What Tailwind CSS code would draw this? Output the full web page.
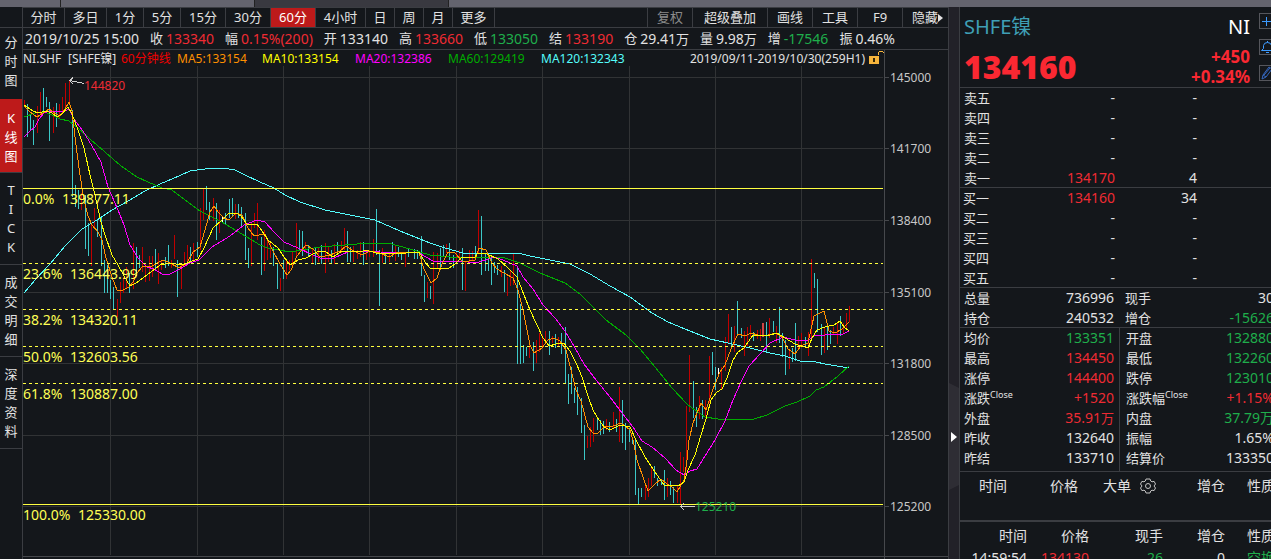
<!DOCTYPE html>
<html lang="zh-CN">
<head>
<meta charset="utf-8">
<meta name="viewport" content="width=device-width, initial-scale=1">
<title>SHFE镍 NI 60分钟线</title>
<script src="https://cdn.jsdelivr.net/npm/@tailwindcss/browser@4"></script>
</head>
<body class="flex h-screen flex-col overflow-hidden bg-[#14171b] font-['Noto_Sans','Noto_Sans_CJK_SC',sans-serif] text-[13px] text-[#e2e2e2]">
<div class="flex h-[7px] shrink-0 bg-[#64646e]">
  <div class="w-[61px] border-r border-[#222]"></div>
  <div class="w-[194px] border-r border-[#222]"></div>
  <div class="w-[194px] border-r border-[#222] bg-[#393940]"></div>
</div>
<div class="flex min-h-0 flex-1">
  <nav aria-label="视图" class="flex w-[23px] shrink-0 flex-col border-r border-[#3b3d42] text-center leading-[19px]">
    <div class="h-[21px] shrink-0 border-b border-[#3b3d42]"></div>
    <button class="h-[71px] shrink-0 px-1 pb-1">分时图</button>
    <button class="h-[74px] shrink-0 border-b border-[#3b3d42] bg-[#bd1a1a] px-1 pt-1 text-white">K<br>线<br>图</button>
    <button class="h-[92px] shrink-0 border-b border-[#3b3d42] px-1">T<br>I<br>C<br>K</button>
    <button class="h-[92px] shrink-0 border-b border-[#3b3d42] px-1">成交明细</button>
    <button class="h-[92px] shrink-0 border-b border-[#3b3d42] px-1">深度资料</button>
  </nav>

  <main class="flex min-w-0 flex-1 flex-col border-r border-[#3b3d42]">
    <div class="flex h-[21px] shrink-0 border-y border-[#3b3d42] leading-[19px]">
      <button class="w-[42px] border-r border-[#3b3d42]">分时</button>
      <button class="w-[42px] border-r border-[#3b3d42]">多日</button>
      <button class="w-[37px] border-r border-[#3b3d42]">1分</button>
      <button class="w-[37px] border-r border-[#3b3d42]">5分</button>
      <button class="w-[45px] border-r border-[#3b3d42]">15分</button>
      <button class="w-[45px] border-r border-[#3b3d42]">30分</button>
      <button class="w-[45px] border-r border-[#3b3d42] bg-[#bd1a1a] text-white">60分</button>
      <button class="w-[50px] border-r border-[#3b3d42]">4小时</button>
      <button class="w-[29px] border-r border-[#3b3d42]">日</button>
      <button class="w-[29px] border-r border-[#3b3d42]">周</button>
      <button class="w-[29px] border-r border-[#3b3d42]">月</button>
      <button class="w-[42px] border-r border-[#3b3d42]">更多</button>
      <div class="ml-auto flex">
        <button class="w-[46px] border-x border-[#3b3d42] text-[#8b8b8b]">复权</button>
        <button class="w-[75px] border-r border-[#3b3d42]">超级叠加</button>
        <button class="w-[45px] border-r border-[#3b3d42]">画线</button>
        <button class="w-[45px] border-r border-[#3b3d42]">工具</button>
        <button class="w-[45px] border-r border-[#3b3d42]">F9</button>
        <button class="flex w-[45px] items-center justify-center pl-1">隐藏<svg class="h-2 w-[5px]" viewBox="0 0 5 8"><path d="M0 0 5 4 0 8Z" fill="#e2e2e2"/></svg></button>
      </div>
    </div>
    <div class="flex h-[22px] shrink-0 gap-[11px] overflow-hidden border-b border-[#3b3d42] pl-[2px] leading-[21px] whitespace-nowrap">
      <span class="text-[14px]">2019/10/25 15:00</span>
      <span class="flex gap-[3px]">收<b class="text-[14px] font-normal text-[#ef2b33]">133340</b></span>
      <span class="flex gap-[3px]">幅<b class="text-[14px] font-normal text-[#ef2b33]">0.15%(200)</b></span>
      <span class="flex gap-[3px]">开<b class="text-[14px] font-normal">133140</b></span>
      <span class="flex gap-[3px]">高<b class="text-[14px] font-normal text-[#ef2b33]">133660</b></span>
      <span class="flex gap-[3px]">低<b class="text-[14px] font-normal text-[#1fae4b]">133050</b></span>
      <span class="flex gap-[3px]">结<b class="text-[14px] font-normal text-[#ef2b33]">133190</b></span>
      <span class="flex gap-[3px]">仓<b class="text-[14px] font-normal">29.41<span class="text-[13px]">万</span></b></span>
      <span class="flex gap-[3px]">量<b class="text-[14px] font-normal">9.98<span class="text-[13px]">万</span></b></span>
      <span class="flex gap-[3px]">增<b class="text-[14px] font-normal text-[#1fae4b]">-17546</b></span>
      <span class="flex gap-[3px]">振<b class="text-[14px] font-normal">0.46%</b></span>
    </div>
    <div class="flex h-4 shrink-0">
      <div class="flex min-w-0 flex-1 overflow-hidden text-[12px] leading-[17px] whitespace-nowrap">
        <span class="w-[45px] shrink-0">NI.SHF</span>
        <span class="w-[53px] shrink-0">[SHFE镍]</span>
        <span class="w-[56px] shrink-0 text-[#f00000]">60分钟线</span>
        <span class="w-[85px] shrink-0 text-[#ff9000]">MA5:133154</span>
        <span class="w-[93px] shrink-0 text-[#ffff00]">MA10:133154</span>
        <span class="w-[93px] shrink-0 text-[#ff00ff]">MA20:132386</span>
        <span class="w-[93px] shrink-0 text-[#00ac00]">MA60:129419</span>
        <span class="shrink-0 text-[#54fcfc]">MA120:132343</span>
        <span class="ml-auto shrink-0 pr-1">2019/09/11-2019/10/30(259H1)</span>
        <svg class="h-4 w-[15px] shrink-0" viewBox="0 0 15 16" shape-rendering="crispEdges"><path d="M0 6h10v8H0z" fill="#f7b53c"/><path d="M4 8h2v4H4z" fill="#3a2a08"/><path d="M9 5V3l2-2h2l2 2v2" fill="none" stroke="#f7b53c"/></svg>
      </div>
      <div class="w-16 shrink-0 border-l border-[#46484c]"></div>
    </div>
    <svg id="chart" class="min-h-0 w-full flex-1" viewBox="23 66 925 493" role="img" aria-label="60分钟K线图" shape-rendering="crispEdges">
      <path d="M23 77.5H883M23 148.5H883M23 220.5H883M23 292.5H883M23 363.5H883M23 435.5H883M23 506.5H883M110.5 66V555M197.5 66V555M283.5 66V555M369.5 66V555M456.5 66V555M542.5 66V555M629.5 66V555M715.5 66V555M801.5 66V555" fill="none" stroke="#313335"/>
      <path d="M884.5 66V559M23 556.5H948M884 77.5H889M884 148.5H889M884 220.5H889M884 292.5H889M884 363.5H889M884 435.5H889M884 506.5H889" fill="none" stroke="#46484c"/>
      <path id="down" fill="none" stroke="#3cc8c8"/>
      <path id="up" fill="none" stroke="#c00000"/>
      <path d="M762 323h2v14h-2z" fill="#d04444"/>
      <path d="M222.500 217V223M718.500 368V377" stroke="#fff"/>
      <g fill="none" id="averages">
        <polyline stroke="#54fcfc" points="24,293 36,279 50,264 65,246 82,229 97,220 112,210 130,200 145,191 160,184 172,179 190,171 205,169 222,168 235,170 245,175 260,182 274,188 285,195 300,202 325,210 350,215 375,220 400,231 430,243 445,248 463,253 490,254 518,253 530,256 550,260 570,264 590,274 610,286 630,297 652,313 668,322 685,329 710,339 728,343 750,348 770,353 785,356 800,361 816,362 825,364 849,368"/>
        <polyline stroke="#00ac00" points="24,117 35,113 44,112 52,115 60,119 69,121 77,127 90,139 105,152 121,166 137,177 148,182 162,188 172,190 185,200 200,211 220,221 237,231 260,245 268,248 290,252 320,247 345,245 370,243 388,243 410,249 430,255 450,257 480,257 505,258 520,263 540,273 565,283 580,294 600,314 606,320 626,335 640,349 655,367 672,388 688,405 705,417 718,419 754,419 767,415 785,406 797,402 810,396 816,390 824,387 838,376 849,366"/>
        <polyline stroke="#ff00ff" points="24,137 30,131 35,127 39,119 44,113 50,111 62,112 69,109 74,119 83,131 92,146 101,162 108,187 118,210 124,225 130,245 138,258 147,267 154,269 162,274 170,274 180,269 190,263 199,260 212,247 230,236 244,225 257,220 265,222 274,232 284,242 298,248 313,255 320,258 334,258 350,251 380,252 419,253 433,261 460,261 475,263 486,260 494,257 503,260 517,266 523,277 533,289 543,305 555,318 565,331 575,348 584,364 596,380 610,397 622,413 633,427 642,441 652,447 665,458 676,470 684,475 690,471 697,469 705,456 715,440 725,421 733,400 741,382 749,366 761,353 770,343 783,337 795,340 808,341 814,335 825,335 843,334 849,331"/>
        <polyline stroke="#ff9000" points="24,106 30,112 37,117 43,113 49,109 56,114 60,116 65,109 69,102 72,111 76,145 80,175 84,200 88,216 92,225 98,232 102,240 106,258 112,277 117,290 121,291 129,287 133,282 137,273 143,266 152,266 163,260 170,263 179,268 187,263 193,252 200,247 205,230 210,212 214,206 218,212 224,218 229,220 236,213 242,215 248,228 254,236 265,234 272,249 280,264 287,275 291,270 297,256 306,245 313,249 320,257 330,255 340,251 346,246 352,250 362,255 370,251 380,253 389,257 396,253 408,252 419,253 424,269 431,283 437,278 442,264 448,252 455,253 463,262 475,260 479,248 486,250 492,263 497,269 504,273 513,278 518,290 523,310 530,345 534,353 542,348 548,340 554,338 560,341 566,350 571,370 576,390 581,401 584,412 588,427 593,433 598,433 604,427 613,426 621,423 630,430 633,440 637,460 644,480 648,491 654,485 661,479 667,484 672,487 677,492 684,480 687,460 689,440 693,423 701,403 706,410 713,389 720,372 725,365 731,349 738,334 745,336 751,333 758,335 768,335 776,333 782,337 788,349 795,354 801,346 808,343 814,316 820,313 824,311 829,331 835,333 842,329 849,322"/>
        <polyline stroke="#ffff00" points="24,105 33,111 38,113 46,111 52,113 57,117 62,114 68,107 72,114 78,130 84,148 90,175 95,195 101,222 105,235 112,255 118,265 124,276 130,286 136,283 143,278 151,272 160,265 170,263 182,265 192,261 198,259 204,248 213,228 221,221 229,213 236,213 241,216 247,224 257,224 262,231 268,240 278,248 284,257 290,265 298,260 306,258 313,254 319,251 326,252 333,257 342,251 360,252 366,250 376,253 400,254 412,252 419,252 425,262 430,268 449,268 455,264 462,257 475,257 478,253 487,254 498,259 508,268 517,277 522,290 530,310 537,325 543,338 549,346 556,344 564,343 570,351 577,365 582,377 588,396 593,410 597,417 604,427 610,430 620,425 630,427 636,440 645,457 655,472 664,485 678,486 684,482 688,470 695,455 701,435 706,419 711,400 717,392 722,389 727,378 733,360 738,352 744,348 753,335 770,335 777,333 785,338 795,344 808,348 812,338 817,330 825,327 834,325 840,321 844,327 849,331"/>
      </g>
      <path d="M23 188.500H883M23 504.500H883" stroke="#ffff40"/>
      <path d="M23 263.500H883M23 309.500H883M23 346.500H883M23 383.500H883" stroke="#ffff40" stroke-dasharray="3 3"/>
      <g fill="none" stroke="#d0d0d0"><path d="M84 83.500 70 80.500M73 77.500 70 80.500 73 84"/><path d="M695 506.500H681M684 503 681 506.500 684 510"/></g>
      <g class="text-[14px]" fill="#ffff55">
        <text x="23" y="204">0.0%</text><text x="62" y="204">139877.11</text>
        <text x="23" y="279">23.6%</text><text x="70" y="279">136443.99</text>
        <text x="23" y="325">38.2%</text><text x="70" y="325">134320.11</text>
        <text x="23" y="362">50.0%</text><text x="70" y="362">132603.56</text>
        <text x="23" y="399">61.8%</text><text x="70" y="399">130887.00</text>
        <text x="23" y="520">100.0%</text><text x="78" y="520">125330.00</text>
      </g>
      <g class="text-[12px]">
        <text x="84" y="90" fill="#ef2b33">144820</text>
        <text x="695" y="511" fill="#1fae4b">125210</text>
        <g fill="#c8c8c8"><text x="890" y="82">145000</text><text x="890" y="153">141700</text><text x="890" y="225">138400</text><text x="890" y="297">135100</text><text x="890" y="368">131800</text><text x="890" y="440">128500</text><text x="890" y="511">125200</text></g>
      </g>
    </svg>
  </main>

  <button aria-label="展开侧栏" class="w-[10px] shrink-0 bg-[#222128]">
    <svg class="h-full w-full" viewBox="0 0 10 552" preserveAspectRatio="none"><path d="M0 376 10 381V478L0 483Z" fill="#2e2d34"/><path d="M2 425 8 430 2 435Z" fill="#fff"/></svg>
  </button>

  <aside class="flex w-[312px] shrink-0 flex-col overflow-hidden border-l border-[#3b3d42]">
    <div class="flex h-full w-[330px] shrink-0 flex-col">
      <header class="flex h-[81px] shrink-0 border-b border-[#3b3d42] pl-1">
        <div class="flex w-[286px] flex-col">
          <div class="flex justify-between text-[20px] leading-[40px]"><h1 class="text-[#3f9fb5]">SHFE镍</h1><span class="text-white">NI</span></div>
          <div class="flex items-center justify-between font-bold text-[#fa2832]">
            <strong class="text-[32px] leading-[40px]">134160</strong>
            <div class="text-right text-[17px] leading-5"><div>+450</div><div>+0.34%</div></div>
          </div>
        </div>
        <div class="ml-[9px] flex flex-col gap-[10px] pt-[6px]">
          <button aria-label="添加" class="size-4 border border-[#55565c]"><svg class="size-[14px]" viewBox="0 0 14 14" shape-rendering="crispEdges"><path d="M2 7.500H12M6.500 3V12" fill="none" stroke="#3d9bff"/></svg></button>
          <button aria-label="提醒" class="size-4 border border-[#55565c]"><svg class="size-[14px]" viewBox="0 0 14 14" fill="none" stroke="#3d9bff"><path d="M1.500 10.500H13.500L11.500 8.500V5.500Q11 2.500 7.500 2.500T3.500 5.500V8.500ZM6 12.500H9M7.500 1V2.500"/></svg></button>
          <button aria-label="编辑" class="size-4 border border-[#55565c]"><svg class="size-[14px]" viewBox="0 0 14 14" fill="none" stroke="#3567c0"><path d="M2 13 3 9 9 1 12 3 6 11ZM3 9 6 11M4 9 10 2"/></svg></button>
        </div>
      </header>
      <div class="h-[100px] shrink-0 border-b border-[#3b3d42]">
      <table class="w-[237px] table-fixed text-right text-[14px] leading-5">
        <tbody>
          <tr><th scope="row" class="w-[60px] pl-1 text-left text-[13px] font-normal">卖五</th><td class="w-[95px]">-</td><td>-</td></tr>
          <tr><th scope="row" class="pl-1 text-left text-[13px] font-normal">卖四</th><td>-</td><td>-</td></tr>
          <tr><th scope="row" class="pl-1 text-left text-[13px] font-normal">卖三</th><td>-</td><td>-</td></tr>
          <tr><th scope="row" class="pl-1 text-left text-[13px] font-normal">卖二</th><td>-</td><td>-</td></tr>
          <tr><th scope="row" class="pl-1 text-left text-[13px] font-normal">卖一</th><td class="text-[#ef2b33]">134170</td><td>4</td></tr>
        </tbody>
      </table>
      </div>
      <div class="h-[100px] shrink-0 border-b border-[#3b3d42]">
      <table class="w-[237px] table-fixed text-right text-[14px] leading-5">
        <tbody>
          <tr><th scope="row" class="w-[60px] pl-[3px] text-left text-[13px] font-normal">买一</th><td class="w-[95px] text-[#ef2b33]">134160</td><td>34</td></tr>
          <tr><th scope="row" class="pl-[3px] text-left text-[13px] font-normal">买二</th><td>-</td><td>-</td></tr>
          <tr><th scope="row" class="pl-[3px] text-left text-[13px] font-normal">买三</th><td>-</td><td>-</td></tr>
          <tr><th scope="row" class="pl-[3px] text-left text-[13px] font-normal">买四</th><td>-</td><td>-</td></tr>
          <tr><th scope="row" class="pl-[3px] text-left text-[13px] font-normal">买五</th><td>-</td><td>-</td></tr>
        </tbody>
      </table>
      </div>
      <dl class="grid h-10 shrink-0 auto-rows-[20px] grid-cols-[159px_1fr] border-b border-[#3b3d42] text-[14px] leading-5">
        <div class="flex justify-between pr-[5px] pl-1"><dt class="text-[13px]">总量</dt><dd>736996</dd></div>
        <div class="flex justify-between pr-4 pl-[6px]"><dt class="text-[13px]">现手</dt><dd>30</dd></div>
        <div class="flex justify-between pr-[5px] pl-1"><dt class="text-[13px]">持仓</dt><dd>240532</dd></div>
        <div class="flex justify-between pr-4 pl-[6px]"><dt class="text-[13px]">增仓</dt><dd class="text-[#1fae4b]">-15626</dd></div>
      </dl>
      <div class="grid h-36 shrink-0 grid-cols-[160px_1fr] border-b border-[#3b3d42] text-[14px] leading-5">
        <dl class="border-r border-[#3b3d42] pr-[5px] pl-1">
          <div class="flex h-5 justify-between"><dt class="text-[13px]">均价</dt><dd class="text-[#1fae4b]">133351</dd></div>
          <div class="flex h-5 justify-between"><dt class="text-[13px]">最高</dt><dd class="text-[#ef2b33]">134450</dd></div>
          <div class="flex h-5 justify-between"><dt class="text-[13px]">涨停</dt><dd class="text-[#ef2b33]">144400</dd></div>
          <div class="flex h-5 justify-between"><dt class="flex text-[13px]">涨跌<small class="text-[9px] leading-[14px]">Close</small></dt><dd class="text-[#ef2b33]">+1520</dd></div>
          <div class="flex h-5 justify-between"><dt class="text-[13px]">外盘</dt><dd class="text-[#ef2b33]">35.91<span class="text-[13px]">万</span></dd></div>
          <div class="flex h-5 justify-between"><dt class="text-[13px]">昨收</dt><dd>132640</dd></div>
          <div class="flex h-5 justify-between"><dt class="text-[13px]">昨结</dt><dd>133710</dd></div>
        </dl>
        <dl class="pr-4 pl-[6px]">
          <div class="flex h-5 justify-between"><dt class="text-[13px]">开盘</dt><dd class="text-[#1fae4b]">132880</dd></div>
          <div class="flex h-5 justify-between"><dt class="text-[13px]">最低</dt><dd class="text-[#1fae4b]">132260</dd></div>
          <div class="flex h-5 justify-between"><dt class="text-[13px]">跌停</dt><dd class="text-[#1fae4b]">123010</dd></div>
          <div class="flex h-5 justify-between"><dt class="flex text-[13px]">涨跌幅<small class="text-[9px] leading-[14px]">Close</small></dt><dd class="text-[#ef2b33]">+1.15%</dd></div>
          <div class="flex h-5 justify-between"><dt class="text-[13px]">内盘</dt><dd class="text-[#1fae4b]">37.79万</dd></div>
          <div class="flex h-5 justify-between"><dt class="text-[13px]">振幅</dt><dd>1.65%</dd></div>
          <div class="flex h-5 justify-between"><dt class="text-[13px]">结算价</dt><dd>133350</dd></div>
        </dl>
      </div>
      <div class="grid h-[50px] shrink-0 grid-cols-[47px_71px_53px_94px_1fr] border-b-2 border-[#3b3d42] text-right text-[14px] leading-[27px]">
        <span>时间</span><span>价格</span><span>大单</span>
        <span class="flex justify-between pl-[9px]"><button aria-label="大单设置" class="h-[27px]"><svg class="size-4" viewBox="0 0 16 16" fill="none" stroke="#c4c4c4"><path d="M6 1H10L10.700 3 12 3.800 14.100 3.400 15.500 6 14 8 15.500 10 14.100 12.600 12 12.200 10.700 13 10 15H6L5.300 13 4 12.200 1.900 12.600.5 10 2 8 .5 6 1.900 3.400 4 3.800 5.300 3Z"/><circle cx="8" cy="8" r="2.500"/></svg></button>增仓</span>
        <span class="pr-[15px]">性质</span>
      </div>
      <table class="w-full shrink-0 table-fixed text-right text-[14px]">
        <thead><tr class="h-[25px]"><th class="w-[67px] pt-[2px] font-normal">时间</th><th class="w-[62px] pt-[2px] font-normal">价格</th><th class="w-[74px] pt-[2px] font-normal">现手</th><th class="w-[62px] pt-[2px] font-normal">增仓</th><th class="pt-[2px] pr-[15px] font-normal">性质</th></tr></thead>
        <tbody><tr><td>14:59:54</td><td class="text-[#ef2b33]">134130</td><td class="text-[#1fae4b]">26</td><td>0</td><td class="pr-[15px] text-[#1fae4b]">空换</td></tr></tbody>
      </table>
    </div>
  </aside>
</div>
<script>
// Bar ranges as x, high, low in chart units.
const falling = [[27,104,137],[30,115,130],[33,120,145],[43,88,112],[46,97,107],[49,102,141],[56,103,127],[72,110,197],[75,185,207],[78,190,209],[85,195,249],[88,223,256],[97,220,237],[101,218,266],[104,260,293],[107,265,293],[110,280,299],[113,287,309],[129,273,293],[136,247,276],[139,255,268],[155,249,270],[165,257,268],[168,245,266],[177,260,297],[190,247,262],[197,242,257],[206,186,210],[209,202,220],[216,203,240],[225,213,224],[229,199,218],[232,198,217],[238,204,218],[241,207,227],[245,213,260],[248,248,268],[261,237,275],[273,247,266],[277,263,289],[283,260,279],[299,230,250],[302,231,256],[308,245,257],[315,248,265],[321,245,264],[331,250,264],[337,242,255],[347,231,262],[350,247,262],[363,242,265],[376,209,255],[379,250,306],[385,253,264],[392,242,257],[398,247,257],[401,252,260],[408,248,257],[414,249,259],[417,250,259],[421,236,276],[424,275,302],[430,286,299],[440,248,268],[443,245,257],[449,243,260],[453,255,268],[462,248,290],[475,246,258],[481,216,275],[485,253,271],[488,253,271],[491,257,285],[494,262,273],[497,265,275],[504,270,292],[517,268,364],[520,304,364],[523,345,363],[526,347,356],[533,342,371],[549,331,355],[555,334,348],[561,333,354],[565,327,383],[568,374,404],[571,367,394],[574,388,403],[577,387,415],[581,398,433],[584,425,460],[597,417,430],[600,420,435],[603,421,434],[609,422,432],[616,419,432],[622,400,443],[625,423,450],[629,428,442],[632,437,444],[635,440,495],[638,488,504],[641,488,497],[654,466,478],[657,478,486],[661,479,485],[664,470,500],[670,481,495],[673,487,503],[693,381,418],[696,407,427],[702,400,419],[712,352,375],[715,367,390],[731,327,346],[737,301,335],[741,328,338],[753,332,341],[766,322,352],[773,321,332],[779,307,343],[782,333,357],[785,340,375],[792,348,362],[795,323,361],[805,337,346],[814,273,288],[817,279,332],[821,324,355],[827,325,350],[830,330,344],[840,316,336]];
const rising = [[24,100,107],[37,106,133],[40,92,115],[53,107,133],[59,104,118],[62,97,112],[65,83,107],[69,81,103],[81,193,210],[91,223,266],[94,208,228],[117,299,317],[120,282,303],[123,277,293],[126,267,288],[133,243,289],[142,247,272],[145,263,282],[149,256,281],[152,256,277],[158,253,284],[161,260,270],[171,260,268],[174,235,259],[181,264,289],[184,252,267],[187,245,265],[193,243,260],[200,208,250],[203,189,220],[213,198,221],[219,210,233],[235,204,219],[251,222,266],[254,213,228],[257,203,240],[264,230,271],[267,240,260],[270,243,258],[280,278,291],[286,260,279],[289,260,270],[292,252,267],[296,223,257],[305,242,252],[312,248,263],[318,248,262],[325,243,273],[328,247,262],[334,244,264],[341,241,253],[344,228,250],[353,246,262],[357,250,259],[360,242,257],[366,250,260],[369,250,257],[373,239,257],[382,248,263],[389,253,262],[395,246,261],[405,252,267],[427,282,298],[433,252,304],[437,253,268],[446,244,253],[456,252,262],[459,250,258],[465,262,291],[469,250,262],[472,251,260],[478,210,253],[501,266,277],[507,277,296],[510,270,286],[513,254,285],[529,343,358],[536,340,363],[539,333,352],[542,335,348],[545,331,344],[552,336,343],[558,337,347],[587,436,448],[590,427,447],[593,418,442],[606,419,430],[613,412,428],[619,387,442],[645,483,500],[648,478,497],[651,466,486],[667,478,497],[677,485,503],[680,452,504],[683,457,472],[686,406,470],[689,355,412],[699,396,419],[705,400,416],[709,356,403],[721,367,390],[725,337,371],[728,314,343],[734,326,352],[744,331,356],[747,327,346],[750,325,337],[757,330,339],[760,329,341],[769,318,338],[776,326,343],[789,350,369],[798,336,348],[801,333,347],[808,332,356],[811,259,340],[824,327,353],[833,327,334],[837,323,344],[843,323,333],[846,313,330],[849,306,322]];
const toPath = bars => bars.map(([x, high, low]) => `M${x + 0.5} ${high}V${low}`).join('');
document.getElementById('down').setAttribute('d', toPath(falling));
document.getElementById('up').setAttribute('d', toPath(rising));
</script>
</body>
</html>
